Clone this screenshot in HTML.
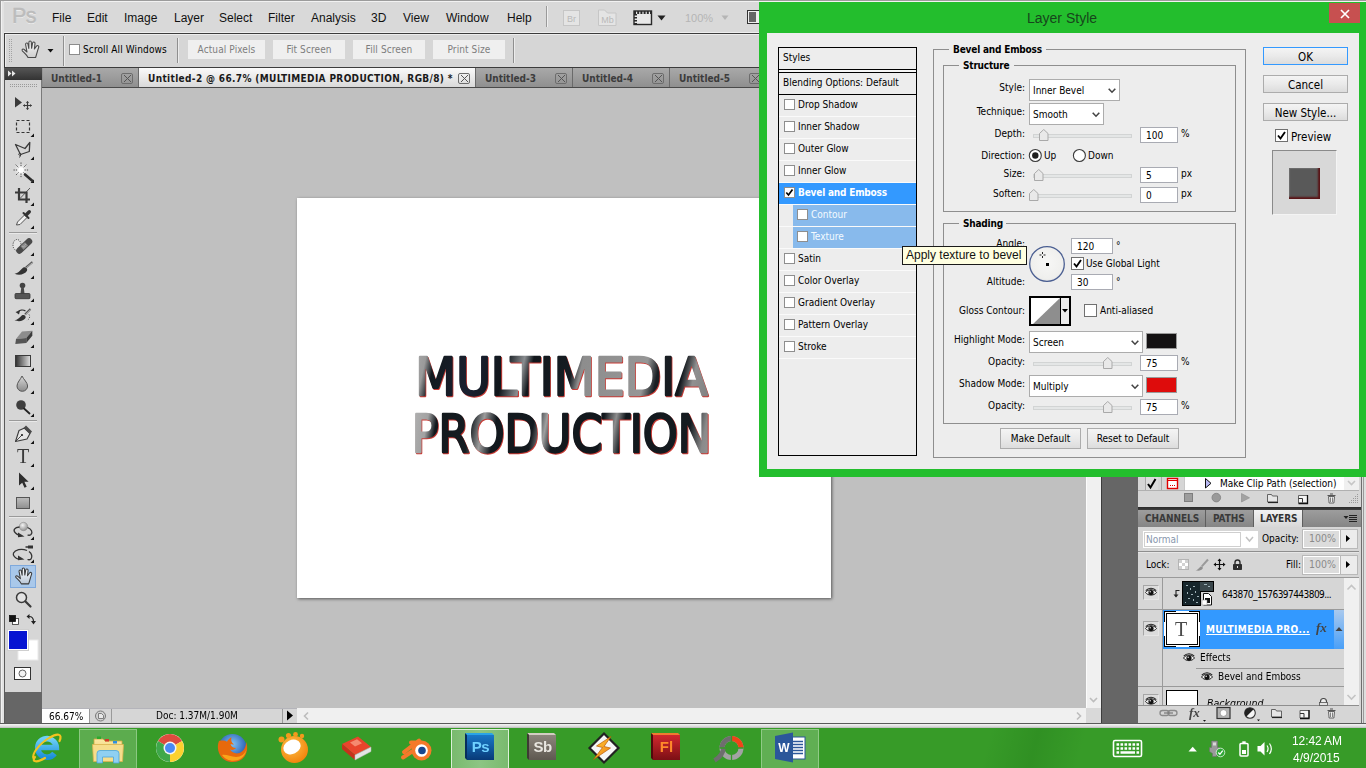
<!DOCTYPE html>
<html><head><meta charset="utf-8"><title>Layer Style</title>
<style>
*{box-sizing:border-box;margin:0;padding:0}
html,body{width:1366px;height:768px;overflow:hidden;background:#d6d6d6}
body{position:relative;font-family:"DejaVu Sans Condensed","Liberation Sans",sans-serif;font-size:10px;color:#000}
.a{position:absolute}
.t{position:absolute;white-space:nowrap;line-height:1}
.seg{font-family:"Liberation Sans","DejaVu Sans Condensed",sans-serif}
/* ---------- app chrome ---------- */
#menubar{left:0;top:0;width:1366px;height:34px;background:#d9d9d9;border-bottom:1px solid #3c3c3c;border-top:1px solid #9c9c9c;box-shadow:inset 0 1px 0 #f2f2f2,inset 0 -1px 0 #efefef}
#menubar .t{top:11px;font-size:12px;color:#111}
#optbar{left:4px;top:34px;width:1362px;height:34px;background:#d6d6d6;border-left:1px solid #3c3c3c;border-bottom:1px solid #3c3c3c;box-shadow:inset 1px 1px 0 #ededed}
.obtn{position:absolute;top:40px;height:19px;background:#efefef;color:#7d7d7d;text-align:center;line-height:20px;font-size:10px;letter-spacing:.1px}
#tabbar{left:42px;top:68px;width:1044px;height:20px;background:linear-gradient(#9a9a9a,#8a8a8a);border-bottom:1px solid #4a4a4a}
.tab{position:absolute;top:68px;height:19px;background:linear-gradient(#a9a9a9,#8f8f8f);border-right:1px solid #6a6a6a;font-weight:bold;font-size:10px;color:#3c3c3c}
.tab.act{background:linear-gradient(#fafafa,#d9d9d9);color:#1a1a1a}
.tab .t{top:6px}
.tabx{position:absolute;top:5px;width:12px;height:11px;border:1px solid #6d6d6d;border-radius:2px;background:linear-gradient(135deg,transparent 46%,#555 46%,#555 54%,transparent 54%),linear-gradient(45deg,transparent 46%,#555 46%,#555 54%,transparent 54%);background-size:7px 7px;background-position:center;background-repeat:no-repeat}
#canvas{left:42px;top:88px;width:1044px;height:620px;background:#c0c0c0}
#doc{left:297px;top:198px;width:534px;height:400px;background:#fff;box-shadow:1px 1px 3px rgba(0,0,0,.55)}
#vscroll{left:1086px;top:68px;width:15px;height:640px;background:#f0f0f0}
#dock{left:1101px;top:68px;width:37px;height:656px;background:#666}
#toolbar{left:5px;top:68px;width:37px;height:624px;background:#d6d6d6;border-right:1px solid #7a7a7a}
#toolhead{left:5px;top:68px;width:37px;height:12px;background:linear-gradient(#555,#333)}
#toolbelow{left:5px;top:692px;width:37px;height:32px;background:#666}
#status{left:42px;top:706px;width:1059px;height:18px;background:#d6d6d6}
#winbottom{left:0;top:724px;width:1366px;height:4px;background:#d9d9d9;border-top:1px solid #8a8a8a}
#taskbar{left:0;top:728px;width:1366px;height:40px;background:#359a27}
/* ---------- panels ---------- */
#panels{left:1138px;top:477px;width:224px;height:247px;background:#d6d6d6}
/* ---------- dialog ---------- */
#dlg{left:759px;top:2px;width:620px;height:475px;background:#23be2d}
#dlgin{left:767px;top:33px;width:592px;height:436px;background:#ededed}
</style></head>
<body>
<!-- ===== app chrome ===== -->
<div id="menubar" class="a seg">
 <span class="t" style="left:12px;top:5px;font-size:21.500px;color:#bcbcbc;font-family:'Liberation Sans',sans-serif;letter-spacing:-.5px;-webkit-text-stroke:.5px #bcbcbc;text-shadow:0 1px 0 #f2f2f2">Ps</span>
 <span class="t" style="left:52px">File</span>
 <span class="t" style="left:87px">Edit</span>
 <span class="t" style="left:124px">Image</span>
 <span class="t" style="left:174px">Layer</span>
 <span class="t" style="left:219px">Select</span>
 <span class="t" style="left:268px">Filter</span>
 <span class="t" style="left:311px">Analysis</span>
 <span class="t" style="left:371px">3D</span>
 <span class="t" style="left:403px">View</span>
 <span class="t" style="left:446px">Window</span>
 <span class="t" style="left:507px">Help</span>
</div>
<div id="optbar" class="a"></div>
<div class="obtn" style="left:188px;width:77px">Actual Pixels</div>
<div class="obtn" style="left:273px;width:72px">Fit Screen</div>
<div class="obtn" style="left:353px;width:72px">Fill Screen</div>
<div class="obtn" style="left:433px;width:72px">Print Size</div>
<span class="t" style="left:83px;top:45px;font-size:10px;letter-spacing:.12px">Scroll All Windows</span>

<div class="a" style="left:0;top:0;width:1px;height:728px;background:#999"></div>
<div class="a" style="left:1px;top:1px;width:1px;height:726px;background:#f2f2f2"></div>
<svg class="a" style="left:0;top:0" width="760" height="68" viewBox="0 0 760 68"><defs><linearGradient id="gHandO" x1="0" x2="0" y1="0" y2="1"><stop offset="0" stop-color="#f6f6f6"/><stop offset="1" stop-color="#cfcfcf"/></linearGradient></defs>
<!-- menubar right icons -->
<path d="M546.500 6v21" stroke="#9a9a9a"/><path d="M547.500 6v21" stroke="#f0f0f0"/>
<rect x="563.500" y="10.500" width="16" height="15" fill="#e4e4e4" stroke="#c6c6c6"/>
<text x="571.500" y="21.500" text-anchor="middle" font-family="Liberation Sans,sans-serif" font-size="9" fill="#b9b9b9">Br</text>
<path d="M598.500 25.500v-15.500h6l3 3h8.500v12.500z" fill="#e4e4e4" stroke="#c6c6c6"/>
<text x="607.500" y="22.500" text-anchor="middle" font-family="Liberation Sans,sans-serif" font-size="9" fill="#b9b9b9">Mb</text>
<rect x="634" y="11" width="17.500" height="13.500" fill="#e9e9e9" stroke="#2a2a2a" stroke-width="1.400"/>
<path d="M634 12.500h18" stroke="#2a2a2a" stroke-width="3" stroke-dasharray="2 1.200"/>
<path d="M635.500 14v10" stroke="#2a2a2a" stroke-width="3" stroke-dasharray="1.500 1.500"/>
<path d="M657.500 15.500h8l-4 5z" fill="#222"/>
<text x="685" y="21.500" font-family="Liberation Sans,sans-serif" font-size="11" fill="#b5b5b5">100%</text>
<path d="M721.500 15.500h7l-3.500 4.500z" fill="#b5b5b5"/>
<rect x="747.500" y="10.500" width="16" height="13" fill="#eee" stroke="#333"/><rect x="749" y="12" width="7" height="10" fill="#666"/>
<!-- options bar -->
<path d="M9.500 39v23M11.500 39v23" stroke="#a4a4a4" stroke-dasharray="1 1"/>
<path d="M28 57.500C27 55 24 52.500 22.300 50.800C21.500 49.500 23 48.500 24.200 49.500L27 52L25.600 44.500C25.400 42.800 27.600 42.400 27.900 44L28.800 48.500L28.900 42.300C28.900 40.600 31.300 40.600 31.300 42.300L31.600 48.300L32.600 43C32.900 41.400 35.200 41.800 35 43.500L34.400 49L36.500 46.200C37.300 44.900 39.300 45.800 38.700 47.300C37.500 50.500 36.800 54 35.600 57.500Z" fill="url(#gHandO)" stroke="#4a4a4a" stroke-width="1.100" stroke-linejoin="round"/>
<path d="M47.500 49h6l-3 3.500z" fill="#111"/>
<path d="M63.500 36v30M177.500 38v25M513.500 38v25" stroke="#8f8f8f"/><path d="M64.500 36v30M178.500 38v25M514.500 38v25" stroke="#ececec"/>
<rect x="69.500" y="44.500" width="10" height="10" fill="#fff" stroke="#8c8c8c"/>
</svg>
<div id="tabbar" class="a"></div>
<div class="tab" style="left:43px;width:96px"><span class="t" style="left:8px">Untitled-1</span><i class="tabx" style="left:78px"></i></div>
<div class="tab act" style="left:139px;width:337px"><span class="t" style="left:9px;letter-spacing:.35px">Untitled-2 @ 66.7% (MULTIMEDIA PRODUCTION, RGB/8) *</span><i class="tabx" style="left:319px"></i></div>
<div class="tab" style="left:476px;width:97px"><span class="t" style="left:9px">Untitled-3</span><i class="tabx" style="left:79px"></i></div>
<div class="tab" style="left:573px;width:97px"><span class="t" style="left:9px">Untitled-4</span><i class="tabx" style="left:79px"></i></div>
<div class="tab" style="left:670px;width:97px"><span class="t" style="left:9px">Untitled-5</span><i class="tabx" style="left:79px"></i></div>
<div id="canvas" class="a"></div>
<div id="doc" class="a"></div>
<svg class="a" style="left:297px;top:198px" width="534" height="401" viewBox="297 198 534 401">
<defs>
<linearGradient id="tx1" gradientUnits="userSpaceOnUse" x1="414" y1="355" x2="709" y2="420">
<stop offset="0" stop-color="#a9a9a9"/><stop offset=".04" stop-color="#9a9a9a"/><stop offset=".07" stop-color="#141a20"/><stop offset=".2" stop-color="#1a2030"/><stop offset=".3" stop-color="#10161b"/><stop offset=".36" stop-color="#8a8d90"/><stop offset=".39" stop-color="#11171c"/><stop offset=".52" stop-color="#161c22"/><stop offset=".55" stop-color="#8d8d8d"/><stop offset=".76" stop-color="#969696"/><stop offset=".8" stop-color="#1a1f24"/><stop offset=".88" stop-color="#14191e"/><stop offset=".92" stop-color="#909090"/><stop offset="1" stop-color="#7c7c7c"/>
</linearGradient>
<linearGradient id="tx2" gradientUnits="userSpaceOnUse" x1="410" y1="412" x2="713" y2="470">
<stop offset="0" stop-color="#b4b4b4"/><stop offset=".06" stop-color="#a2a2a2"/><stop offset=".09" stop-color="#12181d"/><stop offset=".2" stop-color="#161c21"/><stop offset=".24" stop-color="#9c9c9c"/><stop offset=".28" stop-color="#12181d"/><stop offset=".4" stop-color="#141a1f"/><stop offset=".44" stop-color="#a0a0a0"/><stop offset=".47" stop-color="#13191e"/><stop offset=".62" stop-color="#11171c"/><stop offset=".66" stop-color="#8e8e8e"/><stop offset=".69" stop-color="#12181d"/><stop offset=".9" stop-color="#151b20"/><stop offset=".95" stop-color="#8a8a8a"/><stop offset="1" stop-color="#9a9a9a"/>
</linearGradient>
</defs>
<g font-family="DejaVu Sans,Liberation Sans,sans-serif" font-size="52" stroke-linejoin="round" stroke-linecap="round" stroke-width="2.400">
<text x="416" y="395.800" textLength="292.500" lengthAdjust="spacingAndGlyphs" fill="#c83a34" stroke="#c83a34">MULTIMEDIA</text>
<text x="412.500" y="453.300" textLength="299.500" lengthAdjust="spacingAndGlyphs" fill="#c83a34" stroke="#c83a34">PRODUCTION</text>
<text x="415.200" y="394.800" textLength="292.500" lengthAdjust="spacingAndGlyphs" fill="url(#tx1)" stroke="url(#tx1)">MULTIMEDIA</text>
<text x="411.700" y="452.300" textLength="299.500" lengthAdjust="spacingAndGlyphs" fill="url(#tx2)" stroke="url(#tx2)">PRODUCTION</text>
</g>
</svg>
<div id="vscroll" class="a"></div>
<div id="dock" class="a"></div><div class="a" style="left:1101px;top:68px;width:1px;height:655px;background:#3c3c3c"></div><div class="a" style="left:1086px;top:68px;width:1px;height:640px;background:#fbfbfb"></div>
<div id="toolbar" class="a"></div>
<div id="toolhead" class="a"></div><div class="a" style="left:4px;top:68px;width:1px;height:655px;background:#5a5a5a"></div><div class="a" style="left:2px;top:1px;width:2px;height:722px;background:#e2e2e2"></div>
<div id="toolbelow" class="a"></div>
<svg id="tools" class="a" style="left:0;top:0;will-change:transform" width="60" height="700" viewBox="0 0 60 700">
<defs>
<linearGradient id="gGrad" x1="0" x2="1"><stop offset="0" stop-color="#2e2e2e"/><stop offset="1" stop-color="#e2e2e2"/></linearGradient>
<linearGradient id="gRect" x1="0" x2="0" y1="0" y2="1"><stop offset="0" stop-color="#bdbdbd"/><stop offset="1" stop-color="#8e8e8e"/></linearGradient>
<radialGradient id="gBall" cx=".4" cy=".35" r=".7"><stop offset="0" stop-color="#f4f4f4"/><stop offset="1" stop-color="#8a8a8a"/></radialGradient>
<radialGradient id="gStar"><stop offset="0" stop-color="#fff"/><stop offset=".55" stop-color="#e9e9e9"/><stop offset="1" stop-color="#d6d6d6" stop-opacity="0"/></radialGradient>
<linearGradient id="gDrop" x1="0" x2="0" y1="0" y2="1"><stop offset="0" stop-color="#d8d8d8"/><stop offset="1" stop-color="#8c8c8c"/></linearGradient>
<linearGradient id="gHand" x1="0" x2="0" y1="0" y2="1"><stop offset="0" stop-color="#ffffff"/><stop offset="1" stop-color="#b9c6d6"/></linearGradient>
</defs>
<!-- header arrows + grip -->
<path d="M8 70.5l3.5 3-3.5 3zM12 70.5l3.5 3-3.5 3z" fill="#e8e8e8"/>
<path d="M10 84.500h28M10 86.500h28" stroke="#9a9a9a" stroke-width="1" stroke-dasharray="1 1"/>
<g fill="#111"><path d="M34 133.5V137H30.500z"/><path d="M34 156.5V160H30.500z"/><path d="M34 179.5V183H30.500z"/><path d="M34 202.5V206H30.500z"/><path d="M34 225.5V229H30.500z"/><path d="M34 252.5V256H30.500z"/><path d="M34 275.5V279H30.500z"/><path d="M34 298.5V302H30.500z"/><path d="M34 321.5V325H30.500z"/><path d="M34 344.5V348H30.500z"/><path d="M34 367.5V371H30.500z"/><path d="M34 390.5V394H30.500z"/><path d="M34 413.5V417H30.500z"/><path d="M34 440.5V444H30.500z"/><path d="M34 463.5V467H30.500z"/><path d="M34 486.5V490H30.500z"/><path d="M34 509.5V513H30.500z"/><path d="M34 536.5V540H30.500z"/><path d="M34 559.5V563H30.500z"/><path d="M34 583.5V587H30.500z"/></g>
<!-- separators -->
<path d="M9 232.5h28M9 420.5h28M9 516.5h28" stroke="#9a9a9a"/>
<path d="M9 233.5h28M9 421.5h28M9 517.5h28" stroke="#e9e9e9"/>
<!-- move -->
<path d="M15 97v10.5l7-5z" fill="#3a3a3a"/>
<path d="M27.5 101.5v8M23.5 105.5h8" stroke="#3a3a3a" stroke-width="1.2"/>
<path d="M26 103l1.5-2 1.5 2zM26 108l1.5 2 1.5-2zM25 104l-2 1.5 2 1.5zM30 104l2 1.5-2 1.5z" fill="#3a3a3a"/>
<!-- marquee -->
<rect x="16.5" y="120.5" width="13" height="12" fill="none" stroke="#333" stroke-width="1.2" stroke-dasharray="3 2"/>
<!-- lasso -->
<path d="M15.5 144.5L25 148.5L29.8 142.5L29.3 151.5L20.5 154.5Z" fill="none" stroke="#3a3a3a" stroke-width="1.3" stroke-linejoin="round"/>
<path d="M21 154c-1.5-1.5-3 0-2 1s2.500-.5 2-1zM21 154.500l-1.500 3" fill="none" stroke="#3a3a3a" stroke-width="1"/>
<!-- wand -->
<circle cx="21" cy="170" r="7.500" fill="url(#gStar)"/>
<path d="M21 162.500v4M21 173.500v4M13.500 170h4M24.500 170h4M15.700 164.700l2.800 2.800M23.500 172.500l2.800 2.800M26.300 164.700l-2.800 2.800M18.500 172.500l-2.800 2.800" stroke="#4a4a4a" stroke-width="1" stroke-dasharray="1.300 1"/>
<circle cx="21" cy="170" r="2.600" fill="#fff"/>
<path d="M25 174.500l7.500 6.500" stroke="#2e2e2e" stroke-width="2.600" stroke-linecap="round"/>
<!-- crop -->
<path d="M19 188v11.500h11M15 192.500h11.500v10.500" fill="none" stroke="#3a3a3a" stroke-width="2.200"/>
<path d="M20 198.500l10-10.500" stroke="#3a3a3a" stroke-width=".8"/>
<!-- eyedropper -->
<path d="M16.500 225l1-3 7-7 2.500 2.500-7 7z" fill="#f2f2f2" stroke="#444" stroke-width=".9"/>
<path d="M23.500 213l5 5" stroke="#333" stroke-width="2" stroke-linecap="round"/>
<path d="M26.500 214.500l2.800-2.800" stroke="#333" stroke-width="3.400" stroke-linecap="round"/>
<!-- healing -->
<ellipse cx="17" cy="245" rx="4" ry="5.500" fill="#e4e4e4" stroke="#333" stroke-width="1" stroke-dasharray="1 1.300"/>
<path d="M19.500 250.500l9.500-9" stroke="#4a4a4a" stroke-width="6.500" stroke-linecap="round"/>
<path d="M22 248l4.500-4.200" stroke="#8a8a8a" stroke-width="4.500"/>
<path d="M23 246.500l.1-.1M25 245l.1-.1M24.500 247l.1-.1" stroke="#ddd" stroke-width="1" stroke-linecap="round"/>
<!-- brush -->
<path d="M14.500 273.800c3.500-.3 5.500-3.300 8.500-6 2.500-1.500 5 .5 4 3-2 3.500-7.500 5-12.500 3z" fill="#333"/>
<path d="M26 267.500l6.500-5.500" stroke="#555" stroke-width="2.200"/>
<path d="M26.300 267.800l6.300-5.300" stroke="#ddd" stroke-width=".7"/>
<!-- stamp -->
<circle cx="22.500" cy="285.500" r="2.800" fill="#444"/>
<path d="M21.300 287h2.400l.8 6.500h-4z" fill="#4a4a4a"/>
<rect x="15" y="293.500" width="15" height="5.200" rx="1" fill="#555" stroke="#333" stroke-width=".8"/>
<!-- history brush -->
<path d="M14.500 320.300c3-.3 5-2.800 7.500-5 2.300-1.200 4.300.6 3.500 2.700-1.800 3-6.500 4-11 2.300z" fill="#333"/>
<path d="M25 314.500l5.500-5.500" stroke="#555" stroke-width="2"/>
<path d="M25.300 314.800l5.300-5.300" stroke="#ddd" stroke-width=".6"/>
<path d="M17.500 312.500c2-2.500 5.500-3 8-1.500" fill="none" stroke="#333" stroke-width="1.300"/>
<path d="M15.500 312l4.500-1.500-1 4z" fill="#333"/>
<path d="M29 314.500c1.500 2 .5 5-2.500 6" fill="none" stroke="#444" stroke-width="1" stroke-dasharray="1 1.500"/>
<!-- eraser -->
<path d="M22 331.500l10.300-.8-6 7.300-10.300 1z" fill="#8d8d8d"/>
<path d="M16 339l10.300-1v5l-11 1z" fill="#555"/>
<path d="M26.300 338l6-7.300v5l-6 7.300z" fill="#3c3c3c"/>
<!-- gradient -->
<rect x="15.500" y="355.500" width="15" height="11" fill="url(#gGrad)" stroke="#3a3a3a"/>
<!-- blur -->
<path d="M22 376c-1.500 3.500-5 6.500-5 10a5.300 5.300 0 0 0 10.600 0c0-3.500-4-6.500-5.600-10z" fill="url(#gDrop)" stroke="#555" stroke-width="1"/>
<!-- dodge -->
<circle cx="21" cy="405" r="4.800" fill="#3e3e3e"/>
<path d="M24 408.500l5.500 5" stroke="#222" stroke-width="1.800" stroke-linecap="round"/>
<!-- pen -->
<path d="M15.500 441.500l3.500-11 5.500-2.500 5.500 5.500-3 5.500z" fill="#e6e6e6" stroke="#3a3a3a" stroke-width="1.100" stroke-linejoin="round"/>
<path d="M15.500 441.500l6.500-6.500" stroke="#3a3a3a" stroke-width=".9"/>
<circle cx="22" cy="435" r="1.100" fill="#222"/>
<path d="M26 425.500l6 6-2 2.500-6.500-6z" fill="#4a4a4a"/>
<!-- type -->
<text x="23" y="463" text-anchor="middle" font-family="Liberation Serif,serif" font-size="20" fill="#3a3a3a">T</text>
<!-- path select -->
<path d="M19 472.500v13l3.200-2.800 2.300 5 2.200-1-2.300-5h4.200z" fill="#2e2e2e"/>
<!-- rectangle -->
<rect x="16.500" y="497.500" width="13" height="11" fill="url(#gRect)" stroke="#555"/>
<!-- 3d rotate -->
<circle cx="23.500" cy="526.500" r="4.200" fill="url(#gBall)" stroke="#888" stroke-width=".5"/>
<path d="M19.500 527c-5 .5-7 3-4 6 1 1 2.500 1.800 4 2.300M27.500 527.500c4 1.500 5.500 5 3.500 7-1 .8-2.500.8-3.500.5" fill="none" stroke="#333" stroke-width="1.300"/>
<path d="M18 532.500l6.500 4-6.500.8z" fill="#333"/>
<!-- 3d camera -->
<path d="M27 550.500c-6-2.500-12-.5-13.500 2.500-1 2.500 1.500 5 5.500 6.500M29 551.500c3 2 3.500 5.500 2 7.500-1 .8-2.500.8-3.500.5" fill="none" stroke="#333" stroke-width="1.300"/>
<path d="M18 555.500l6.500 4-6.500.8z" fill="#333"/>
<rect x="28" y="545.500" width="5" height="3" fill="#333"/><path d="M25.500 547h3" stroke="#333" stroke-width="1.500"/>
<!-- hand selected -->
<rect x="10.500" y="565.500" width="25" height="22" fill="#a9c8ea" stroke="#7fa9dc"/>
<path transform="translate(-5.530,528.700) scale(.96)" d="M28 57.500C27 55 24 52.500 22.300 50.800C21.500 49.500 23 48.500 24.200 49.500L27 52L25.600 44.500C25.400 42.800 27.600 42.400 27.900 44L28.800 48.500L28.900 42.300C28.900 40.600 31.300 40.600 31.300 42.300L31.600 48.300L32.600 43C32.900 41.400 35.200 41.800 35 43.500L34.400 49L36.500 46.200C37.300 44.900 39.300 45.800 38.700 47.300C37.500 50.500 36.800 54 35.600 57.500Z" fill="url(#gHand)" stroke="#3a3a3a" stroke-width="1.100" stroke-linejoin="round"/>
<!-- zoom -->
<circle cx="21.500" cy="597.500" r="5" fill="#e3e3e3" stroke="#3a3a3a" stroke-width="1.500"/>
<path d="M25.500 601.500l5 5" stroke="#3a3a3a" stroke-width="2.200" stroke-linecap="round"/>
<!-- default colours / swap -->
<rect x="12.500" y="618.500" width="6" height="6" fill="#fff" stroke="#333" stroke-width=".8"/>
<rect x="9.500" y="615.500" width="6" height="6" fill="#111" stroke="#111" stroke-width=".8"/>
<path d="M29 616.500c3 0 4.500 1.500 4.500 5" fill="none" stroke="#222" stroke-width="1.200"/>
<path d="M26.500 616.500l3-2.500v5zM31 621l2.500 3.500 2.500-3.500z" fill="#222"/>
<!-- fg / bg -->
<rect x="18" y="640" width="20" height="20" fill="#fff" stroke="#e9e9e9"/>
<rect x="8.500" y="630.500" width="19" height="19" fill="#0614d2" stroke="#fff" stroke-width="1"/>
<rect x="7.500" y="629.500" width="21" height="21" fill="none" stroke="#cfcfcf" stroke-width="1"/>
<!-- quick mask -->
<rect x="14.500" y="667.500" width="16" height="12" fill="#fff" stroke="#333"/>
<circle cx="22.500" cy="673.500" r="3.500" fill="#f2f2f2" stroke="#555" stroke-width=".9"/>
</svg>

<!--PANELS-START-->
<div class="a" style="left:1138px;top:477px;width:223px;height:246px;background:#d6d6d6"></div>
<div class="a" style="left:1361px;top:477px;width:1px;height:247px;background:#6e6e6e"></div>
<div class="a" style="left:1362px;top:477px;width:4px;height:251px;background:#dedede"></div>
<div class="a" style="left:1363px;top:477px;width:1px;height:247px;background:#9a9a9a"></div>
<div class="a" style="left:1185px;top:477px;width:159px;height:13px;background:#fff"></div>
<div class="a" style="left:1344px;top:477px;width:15px;height:13px;background:#f0f0f0"></div>
<div class="a" style="left:1145px;top:477px;width:13px;height:13px;background:#dcdcdc;border-left:1px solid #a8a8a8"></div>
<div class="a" style="left:1161px;top:477px;width:1px;height:13px;background:#a8a8a8"></div>
<div class="a" style="left:1184px;top:477px;width:1px;height:13px;background:#c8c8c8"></div>
<div class="a" style="left:1138px;top:490px;width:221px;height:1px;background:#b0b0b0"></div>
<span class="t" style="top:479px;font-size:10px;left:1220px;">Make Clip Path (selection)</span>
<div class="a" style="left:1138px;top:507px;width:223px;height:3px;background:linear-gradient(#2a2a2a,#3e3e3e)"></div>
<div class="a" style="left:1138px;top:510px;width:223px;height:17px;background:linear-gradient(#9d9d9d,#858585)"></div>
<div class="a" style="left:1205px;top:510px;width:1px;height:17px;background:#5e5e5e"></div>
<div class="a" style="left:1253px;top:510px;width:50px;height:17px;background:linear-gradient(#f2f2f2,#d8d8d8);border-left:1px solid #5e5e5e;border-right:1px solid #5e5e5e"></div>
<span class="t" style="top:514px;font-size:10px;left:1145px;color:#3a3a3a;font-weight:bold;letter-spacing:-.05px;">CHANNELS</span>
<span class="t" style="top:514px;font-size:10px;left:1213px;color:#3a3a3a;font-weight:bold;letter-spacing:-.05px;">PATHS</span>
<span class="t" style="top:514px;font-size:10px;left:1260px;color:#333;font-weight:bold;letter-spacing:-.05px;">LAYERS</span>
<div class="a" style="left:1143px;top:531px;width:115px;height:17px;background:#fff"></div>
<div class="a" style="left:1144px;top:532px;width:97px;height:15px;border:1px solid #cfcfcf"></div>
<span class="t" style="top:535px;font-size:10px;left:1146px;color:#8897ad;">Normal</span>
<span class="t" style="top:534px;font-size:10px;left:1262px;">Opacity:</span>
<div class="a" style="left:1303px;top:530px;width:37px;height:18px;background:#dcdcdc;border:1px solid #fff;box-shadow:0 0 0 1px #b9b9b9"></div><div class="a" style="left:1341px;top:530px;width:16px;height:18px;background:#ececec;box-shadow:0 0 0 1px #b9b9b9"></div><span class="t" style="top:533px;font-size:10.5px;left:1309px;color:#8a8a8a;">100%</span>
<div class="a" style="left:1303px;top:556px;width:37px;height:18px;background:#dcdcdc;border:1px solid #fff;box-shadow:0 0 0 1px #b9b9b9"></div><div class="a" style="left:1341px;top:556px;width:16px;height:18px;background:#ececec;box-shadow:0 0 0 1px #b9b9b9"></div><span class="t" style="top:559px;font-size:10.5px;left:1309px;color:#8a8a8a;">100%</span>
<div class="a" style="left:1138px;top:551px;width:221px;height:1px;background:#8e8e8e"></div>
<div class="a" style="left:1138px;top:552px;width:221px;height:1px;background:#e6e6e6"></div>
<span class="t" style="top:560px;font-size:10px;left:1146px;">Lock:</span>
<span class="t" style="top:560px;font-size:10px;left:1286px;">Fill:</span>
<div class="a" style="left:1138px;top:577px;width:221px;height:1px;background:#9a9a9a"></div>
<div class="a" style="left:1344px;top:578px;width:15px;height:127px;background:#f0f0f0"></div>
<div class="a" style="left:1162px;top:578px;width:1px;height:127px;background:#9a9a9a"></div>
<div class="a" style="left:1138px;top:609px;width:206px;height:1px;background:#9a9a9a"></div>
<div class="a" style="left:1143px;top:585px;width:16px;height:15px;background:#dcdcdc;border:1px solid #e6e6e6;border-top-color:#a6a6a6;border-left-color:#a6a6a6"></div>
<div class="a" style="left:1182px;top:581px;width:19px;height:25px;background:#16252b;border:1px solid #000"></div>
<div class="a" style="left:1200px;top:581px;width:14px;height:11px;background:#3a474c;border:1px solid #000;border-left:none"></div>
<span class="t" style="top:590px;font-size:10px;left:1222px;letter-spacing:-.55px;">643870_1576397443809...</span>
<div class="a" style="left:1163px;top:610px;width:181px;height:39px;background:#3399ff"></div>
<div class="a" style="left:1334px;top:610px;width:10px;height:39px;background:linear-gradient(#a9c9ee,#4aa0f8)"></div>
<div class="a" style="left:1143px;top:621px;width:16px;height:15px;background:#dcdcdc;border:1px solid #e6e6e6;border-top-color:#a6a6a6;border-left-color:#a6a6a6"></div>
<div class="a" style="left:1164px;top:611px;width:36px;height:36px;background:#fff;border:1px solid #000;box-shadow:inset 0 0 0 1px #fff,inset 0 0 0 2px #000"></div>
<div class="a" style="left:1176px;top:611px;width:13px;height:1px;background:#fff"></div>
<div class="a" style="left:1176px;top:646px;width:13px;height:1px;background:#fff"></div>
<div class="a" style="left:1164px;top:622px;width:1px;height:14px;background:#fff"></div>
<div class="a" style="left:1199px;top:622px;width:1px;height:14px;background:#fff"></div>
<span class="t" style="left:1175px;top:619px;font-size:20px;font-family:'Liberation Serif',serif;color:#4a4a4a;will-change:transform">T</span>
<span class="t" style="top:625px;font-size:10px;left:1206px;color:#fff;font-weight:bold;text-decoration:underline;letter-spacing:.4px;">MULTIMEDIA PRO...</span>
<span class="t" style="left:1316px;top:621px;font-size:13px;font-family:'Liberation Serif',serif;font-style:italic;font-weight:bold;color:#444">fx</span>
<span class="t" style="top:653px;font-size:10px;left:1200px;">Effects</span>
<span class="t" style="top:672px;font-size:10px;left:1218px;">Bevel and Emboss</span>
<div class="a" style="left:1196px;top:668px;width:148px;height:1px;background:#9a9a9a"></div>
<div class="a" style="left:1138px;top:686px;width:206px;height:1px;background:#9a9a9a"></div>
<div class="a" style="left:1143px;top:694px;width:16px;height:11px;background:#dcdcdc;border:1px solid #e6e6e6;border-top-color:#a6a6a6;border-left-color:#a6a6a6;border-bottom:none"></div>
<div class="a" style="left:1166px;top:690px;width:32px;height:15px;background:#fff;border:1px solid #000;border-bottom:none"></div>
<div class="a" style="left:1200px;top:687px;width:144px;height:18px;overflow:hidden"><span class="t" style="left:7px;top:11px;font-size:10.500px;font-style:italic">Background</span></div>
<div class="a" style="left:1138px;top:705px;width:221px;height:1px;background:#8e8e8e"></div>
<div class="a" style="left:1138px;top:723px;width:224px;height:1px;background:#555"></div>
<span class="t" style="left:1189px;top:706px;font-size:13px;font-family:'Liberation Serif',serif;font-style:italic;font-weight:bold;color:#444">fx</span>
<svg class="a" style="left:1138px;top:477px" width="228" height="247" viewBox="1138 477 228 247">
<!-- actions row icons -->
<path d="M1148 484l2.500 3.500 5-8.500" fill="none" stroke="#000" stroke-width="2"/>
<rect x="1167.500" y="478.500" width="10" height="10" fill="#fff" stroke="#e00000" stroke-width="1.400"/><path d="M1167 480.500h11" stroke="#e00000" stroke-width="1"/><path d="M1170 485.500h6" stroke="#e00000" stroke-width="1.200" stroke-dasharray="1 1"/>
<path d="M1205.500 478.500v9.500l5.500-4.700z" fill="#b9b9f4" stroke="#111" stroke-width="1"/>
<path d="M1348 481l3.500 3.500 3.500-3.500" fill="none" stroke="#c6c6c6" stroke-width="1.600"/>
<rect x="1184.500" y="493.500" width="8" height="8" fill="#9d9d9d" stroke="#7e7e7e"/>
<circle cx="1216.300" cy="497.600" r="4.300" fill="#9a9a9a" stroke="#808080" stroke-width=".8"/>
<path d="M1241.500 493.500v8.500l8-4.200z" fill="#a2a2a2" stroke="#8c8c8c" stroke-width=".6"/>
<path d="M1267.500 494.500h4l1 1.500h5v6h-10z" fill="#e6e6e6" stroke="#555" stroke-width=".9"/><path d="M1268 502.500h10" stroke="#222" stroke-width="1.200"/>
<path d="M1298.500 495.500h9v7.500h-9z" fill="#f4f4f4" stroke="#555" stroke-width=".9"/><path d="M1298.500 498.500h4v4" fill="none" stroke="#333" stroke-width="1"/><path d="M1307.500 495v8.500h-9" fill="none" stroke="#111" stroke-width="1.300"/>
<path d="M1328.500 496.500h6l-.6 6.500h-4.800z" fill="#eee" stroke="#555" stroke-width=".9"/><path d="M1327.500 495.500h8M1330 494h3" stroke="#555" stroke-width="1.100"/><path d="M1330.500 497.500v4.500M1332.500 497.500v4.500" stroke="#666" stroke-width=".8"/>
<g fill="#9a9a9a"><rect x="1357" y="494" width="1" height="1"/><rect x="1355" y="496" width="1" height="1"/><rect x="1357" y="496" width="1" height="1"/><rect x="1353" y="498" width="1" height="1"/><rect x="1355" y="498" width="1" height="1"/><rect x="1357" y="498" width="1" height="1"/><rect x="1351" y="500" width="1" height="1"/><rect x="1353" y="500" width="1" height="1"/><rect x="1355" y="500" width="1" height="1"/><rect x="1357" y="500" width="1" height="1"/><rect x="1349" y="502" width="1" height="1"/><rect x="1351" y="502" width="1" height="1"/><rect x="1353" y="502" width="1" height="1"/><rect x="1355" y="502" width="1" height="1"/><rect x="1357" y="502" width="1" height="1"/></g>
<!-- tab menu icon -->
<path d="M1343.500 516h5l-2.500 3z" fill="#222"/><path d="M1349 515.500h8M1349 517.500h8M1349 519.500h8M1349 521.500h8" stroke="#222" stroke-width="1"/>
<!-- blend dropdown chevron -->
<path d="M1246 537l3.500 4 3.500-4" fill="none" stroke="#c2c2c2" stroke-width="1.500"/>
<path d="M1346 535v7l4-3.500zM1346 561v7l4-3.500z" fill="#000"/>
<!-- lock icons -->
<rect x="1178.500" y="559.500" width="10" height="10" fill="#fff" stroke="#b4b4b4"/><path d="M1179 560h3v3h-3zM1185 560h3v3h-3zM1182 563h3v3h-3zM1179 566h3v3h-3zM1185 566h3v3h-3z" fill="#d2d2d2"/>
<path d="M1195.500 570.300c2-.2 3.200-2 4.800-3.600 1.600-.8 3 .5 2.400 1.900-1.200 2-4.200 2.700-7.200 1.700z" fill="#909090"/><path d="M1201.800 566.300l6.200-6.800" stroke="#9a9a9a" stroke-width="2"/>
<path d="M1219.500 559v11M1214 564.500h11" stroke="#111" stroke-width="1.200"/><path d="M1217.500 561l2-2.500 2 2.500zM1217.500 568l2 2.500 2-2.500zM1216 562.500l-2.500 2 2.500 2zM1223 562.500l2.500 2-2.500 2z" fill="#111"/>
<rect x="1233" y="564" width="9" height="6" rx=".8" fill="#2e2e2e"/><path d="M1235 564v-1.500a2.500 2.500 0 0 1 5 0v1.500" fill="none" stroke="#2e2e2e" stroke-width="1.400"/><rect x="1237" y="566" width="1" height="2" fill="#ddd"/>
<!-- eyes -->
<g transform="translate(1145.500,588)"><path d="M0 4.500C2.500 .800 8.500 .800 11 4.500 8.500 8 2.500 8 0 4.500z" fill="#f2f2f2" stroke="#222" stroke-width="1"/><circle cx="5.500" cy="4.500" r="2.600" fill="#111"/><circle cx="4.700" cy="3.700" r=".8" fill="#ddd"/><path d="M.3 2.600C3 -.5 8 -.5 10.700 2.600" fill="none" stroke="#222" stroke-width="1.100"/></g><g transform="translate(1145.500,624)"><path d="M0 4.500C2.500 .800 8.500 .800 11 4.500 8.500 8 2.500 8 0 4.500z" fill="#f2f2f2" stroke="#222" stroke-width="1"/><circle cx="5.500" cy="4.500" r="2.600" fill="#111"/><circle cx="4.700" cy="3.700" r=".8" fill="#ddd"/><path d="M.3 2.600C3 -.5 8 -.5 10.700 2.600" fill="none" stroke="#222" stroke-width="1.100"/></g><g transform="translate(1145.500,697)"><path d="M0 4.500C2.500 .800 8.500 .800 11 4.500 8.500 8 2.500 8 0 4.500z" fill="#f2f2f2" stroke="#222" stroke-width="1"/><circle cx="5.500" cy="4.500" r="2.600" fill="#111"/><circle cx="4.700" cy="3.700" r=".8" fill="#ddd"/><path d="M.3 2.600C3 -.5 8 -.5 10.700 2.600" fill="none" stroke="#222" stroke-width="1.100"/></g>
<g transform="translate(1183.500,653.500)"><path d="M0 4.500C2.500 .800 8.500 .800 11 4.500 8.500 8 2.500 8 0 4.500z" fill="#f2f2f2" stroke="#222" stroke-width="1"/><circle cx="5.500" cy="4.500" r="2.600" fill="#111"/><circle cx="4.700" cy="3.700" r=".8" fill="#ddd"/><path d="M.3 2.600C3 -.5 8 -.5 10.700 2.600" fill="none" stroke="#222" stroke-width="1.100"/></g><g transform="translate(1201.500,672.500)"><path d="M0 4.500C2.500 .800 8.500 .800 11 4.500 8.500 8 2.500 8 0 4.500z" fill="#f2f2f2" stroke="#222" stroke-width="1"/><circle cx="5.500" cy="4.500" r="2.600" fill="#111"/><circle cx="4.700" cy="3.700" r=".8" fill="#ddd"/><path d="M.3 2.600C3 -.5 8 -.5 10.700 2.600" fill="none" stroke="#222" stroke-width="1.100"/></g>
<!-- clip arrow -->
<path d="M1179.500 590.500h-3.500v6" fill="none" stroke="#222" stroke-width="1.100"/><path d="M1173.500 594.500l2.500 3 2.500-3z" fill="#222"/>
<!-- texture specks -->
<g fill="#9fb2b8"><rect x="1186" y="585" width="2" height="1"/><rect x="1190" y="588" width="1" height="2"/><rect x="1193" y="586" width="2" height="1"/><rect x="1187" y="592" width="1" height="2"/><rect x="1191" y="594" width="2" height="1"/><rect x="1195" y="591" width="1" height="2"/><rect x="1188" y="598" width="2" height="1"/><rect x="1193" y="599" width="1" height="2"/><rect x="1197" y="596" width="2" height="1"/><rect x="1204" y="584" width="3" height="1"/><rect x="1208" y="586" width="2" height="1"/><rect x="1185" y="602" width="1" height="1"/><rect x="1196" y="602" width="2" height="1"/></g>
<!-- smart object badge -->
<path d="M1203.500 593.500h5l3 3v8.500h-8z" fill="#fff" stroke="#111" stroke-width="1"/><rect x="1205" y="598" width="5" height="5" fill="#111"/><rect x="1202" y="600" width="5" height="5" fill="#fff" stroke="#888" stroke-width=".5"/>
<!-- scroll chevrons -->
<path d="M1347.500 589.500l4-4 4 4" fill="none" stroke="#c4c4c4" stroke-width="1.600"/><path d="M1347.500 695l4 4 4-4" fill="none" stroke="#c4c4c4" stroke-width="1.600"/>
<path d="M1335.500 631h7l-3.500-4z" fill="#444"/>
<!-- bg lock -->
<path d="M1320.500 705v-3.500a3 3 0 0 1 6 0v3.500" fill="#eee" stroke="#444" stroke-width="1.100"/><rect x="1319.500" y="702.500" width="8" height="3" fill="#e4e4e4" stroke="#555" stroke-width=".8"/>
<!-- bottom icons -->
<rect x="1160" y="710.500" width="9" height="5" rx="2.500" fill="none" stroke="#8a8a8a" stroke-width="1.300"/><rect x="1168" y="710.500" width="9" height="5" rx="2.500" fill="none" stroke="#8a8a8a" stroke-width="1.300"/><path d="M1164 713h9" stroke="#777" stroke-width="1.200"/>
<path d="M1203 720h3l-1.500 1.800z" fill="#111"/>
<rect x="1217" y="707.500" width="13" height="11" fill="#b4b4b4" stroke="#333" stroke-width="1.200"/><circle cx="1223.500" cy="713" r="3.400" fill="#fff" stroke="#666" stroke-width=".5"/>
<circle cx="1250" cy="713" r="5.300" fill="#f6f6f6" stroke="#333" stroke-width="1.100"/><path d="M1246.200 716.700a5.300 5.300 0 0 1 7.500-7.500z" fill="#222"/><path d="M1257 719.500h3l-1.500 1.800z" fill="#111"/>
<path d="M1271.500 709.500h4l1 1.500h5v6h-10z" fill="#e6e6e6" stroke="#555" stroke-width=".9"/><path d="M1272 717.500h10" stroke="#222" stroke-width="1.200"/>
<path d="M1300 710.500h9v7.500h-9z" fill="#f4f4f4" stroke="#555" stroke-width=".9"/><path d="M1300 713.500h4v4" fill="none" stroke="#333" stroke-width="1"/><path d="M1309 710v8.500h-9" fill="none" stroke="#111" stroke-width="1.300"/>
<path d="M1328.500 711.500h6l-.6 6.500h-4.800z" fill="#eee" stroke="#555" stroke-width=".9"/><path d="M1327.500 710.500h8M1330 709h3" stroke="#555" stroke-width="1.100"/><path d="M1330.500 712.500v4.500M1332.500 712.500v4.500" stroke="#666" stroke-width=".8"/>
</svg>
<!--PANELS-END-->
<!--BOTTOM-START-->
<div class="a" style="left:42px;top:708px;width:1059px;height:15px;background:#d6d6d6"></div>
<div class="a" style="left:42px;top:708px;width:47px;height:15px;background:#fff"></div>
<span class="t" style="top:712px;font-size:10px;left:49px;">66.67%</span>
<div class="a" style="left:89px;top:708px;width:1px;height:15px;background:#9a9a9a"></div>
<div class="a" style="left:111px;top:708px;width:1px;height:15px;background:#9a9a9a"></div>
<span class="t" style="top:711px;font-size:10px;left:156px;">Doc: 1.37M/1.90M</span>
<div class="a" style="left:282px;top:708px;width:1px;height:15px;background:#9a9a9a"></div>
<div class="a" style="left:42px;top:708px;width:255px;height:1px;background:#b4b4ba"></div>
<div class="a" style="left:297px;top:708px;width:789px;height:15px;background:#f0f0f0"></div>
<div class="a" style="left:1086px;top:708px;width:15px;height:15px;background:#d9d9d9"></div>
<div class="a" style="left:0px;top:723px;width:1366px;height:1px;background:#5a5a5a"></div>
<div class="a" style="left:0px;top:724px;width:1366px;height:4px;background:linear-gradient(#f4f4f4,#dcdcdc 60%,#b9b9b9)"></div>
<div class="a" style="left:0px;top:728px;width:1366px;height:40px;background:linear-gradient(105deg,rgba(0,0,0,0) 72%,rgba(0,70,0,.13) 75.500%,rgba(0,0,0,0) 79%),#379b28"></div>
<div class="a" style="left:79px;top:729px;width:58px;height:40px;background:#5cac4e;border:1px solid #8bc881"></div>
<div class="a" style="left:451px;top:729px;width:58px;height:40px;background:linear-gradient(90deg,#79ba6e,#8cc583 50%,#79ba6e);border:1px solid #dcefd8"></div>
<div class="a" style="left:761px;top:729px;width:58px;height:40px;background:#60af53;border:1px solid #90ca86"></div>
<span class="t" style="top:735px;font-size:12px;left:1292px;color:#fff;font-family:'Liberation Sans',sans-serif;letter-spacing:-.1px;">12:42 AM</span>
<span class="t" style="top:752px;font-size:12px;left:1293px;color:#fff;font-family:'Liberation Sans',sans-serif;">4/9/2015</span>
<svg class="a" style="left:0;top:690px" width="1366" height="78" viewBox="0 690 1366 78">
<defs>
<linearGradient id="ieb" x1="0" x2="0" y1="0" y2="1"><stop offset="0" stop-color="#6fd0f7"/><stop offset="1" stop-color="#1c8fd9"/></linearGradient>
<linearGradient id="fold" x1="0" x2="0" y1="0" y2="1"><stop offset="0" stop-color="#fbe9a4"/><stop offset="1" stop-color="#e9c45c"/></linearGradient>
<radialGradient id="gom" cx=".4" cy=".35" r=".75"><stop offset="0" stop-color="#ffc24a"/><stop offset="1" stop-color="#ef7d05"/></radialGradient>
<radialGradient id="ffg" cx=".5" cy=".35" r=".6"><stop offset="0" stop-color="#7fc2f4"/><stop offset="1" stop-color="#1d4fa8"/></radialGradient>
<linearGradient id="psg" x1="0" x2="0" y1="0" y2="1"><stop offset="0" stop-color="#1a78c8"/><stop offset="1" stop-color="#083a78"/></linearGradient>
<linearGradient id="sbg" x1="0" x2="0" y1="0" y2="1"><stop offset="0" stop-color="#8c857c"/><stop offset="1" stop-color="#5e5850"/></linearGradient>
<linearGradient id="flg" x1="0" x2="0" y1="0" y2="1"><stop offset="0" stop-color="#d0282e"/><stop offset="1" stop-color="#7c0f14"/></linearGradient>
<linearGradient id="wag" x1="0" x2="1" y1="0" y2="1"><stop offset="0" stop-color="#ffd23c"/><stop offset="1" stop-color="#f07a10"/></linearGradient>
</defs>
<!-- status icons -->
<circle cx="100.500" cy="716" r="5" fill="#d0d0d0" stroke="#777" stroke-width="1"/><path d="M98.500 713.500h3l2 2v3h-5z" fill="#e8e8e8" stroke="#666" stroke-width=".8"/>
<path d="M287 710.500v10l6-5z" fill="#000"/>
<path d="M308 712.500l-3.500 3.500 3.500 3.500" fill="none" stroke="#bdbdbd" stroke-width="1.600"/>
<path d="M1077 712.500l3.500 3.500-3.500 3.500" fill="none" stroke="#bdbdbd" stroke-width="1.600"/>
<path d="M1090 698l3.500 3.500 3.500-3.500" fill="none" stroke="#bdbdbd" stroke-width="1.600"/>
<!-- IE -->
<path d="M54.500 753.500A9.300 9.300 0 1 1 56.300 747.500H39" fill="none" stroke="url(#ieb)" stroke-width="5.600"/>
<path d="M35 757c-4 5 2 6 10 1M50 737.500c7-4.500 13-4 9.500 3.500" fill="none" stroke="#f3c320" stroke-width="2.200" stroke-linecap="round"/>
<path d="M33.500 758.500c-2-5 6-15 17-21.500" fill="none" stroke="#f3c320" stroke-width="2" stroke-linecap="round"/>
<!-- Explorer -->
<path d="M94 739h9l2 2h17v20h-28z" fill="url(#fold)" stroke="#d1a640" stroke-width=".8"/>
<path d="M92.500 744.500h31l-1 17h-29z" fill="#f6dd8c" stroke="#d9b24e" stroke-width=".8"/>
<rect x="97" y="736.500" width="4" height="2.500" fill="#2daa2d"/><rect x="105" y="739" width="4" height="2.500" fill="#d43a2a"/><rect x="113" y="741" width="4" height="2.500" fill="#2f8fe0"/>
<path d="M97 763v-9.500q0-3 3-3h16q3 0 3 3v9.500h-5.500v-6h-11v6z" fill="#8fd0f2" stroke="#4aa6dc" stroke-width=".8"/>
<!-- Chrome -->
<circle cx="170" cy="748" r="14" fill="#fff"/>
<path d="M170 748L157.900 741A14 14 0 0 1 182.100 741z" fill="#dd4b3e"/>
<path d="M170 748L182.100 741A14 14 0 0 1 170 762z" fill="#fcd12f"/>
<path d="M170 748L170 762A14 14 0 0 1 157.900 741z" fill="#3fa84a"/>
<circle cx="170" cy="748" r="6.500" fill="#f4f4f4"/><circle cx="170" cy="748" r="5" fill="#4a8af4"/>
<!-- Firefox -->
<circle cx="232.500" cy="748" r="14" fill="url(#ffg)"/>
<path d="M219 741c-2.500 6-1 14 5 18.500 7 4.500 16 3 20.500-3 3-4.500 3.500-10 1.500-14.500.3 5-2.500 9.500-6.500 11-4 1.200-8-.5-9.500-3.500 2.500 1 5 0 6-1.500-3 0-5-1.500-5.500-4 1 .5 2.500.6 3.500.2-2.500-1.500-3.500-4.500-2.500-7-2 1-3.500 2.500-4.500 4.500-1.500-1-4.500-1.500-8-.7z" fill="#e8690c"/>
<path d="M222 755c4 6 13 7.500 19 3.500 3-2 5-5.500 5.500-9-1.500 4.500-5.500 7.500-10.500 7.500-5.500 0-10-3-14-2z" fill="#f9a51a"/>
<!-- GOM -->
<circle cx="294.500" cy="749.500" r="13.500" fill="url(#gom)"/>
<ellipse cx="292" cy="747" rx="9" ry="7" fill="#fff" transform="rotate(-25 292 747)"/>
<circle cx="281.500" cy="739.500" r="3" fill="#f39a1c"/><circle cx="288.500" cy="735.500" r="2.600" fill="#f39a1c"/><circle cx="295.500" cy="734.500" r="2.400" fill="#f39a1c"/><circle cx="302" cy="736" r="2.200" fill="#f39a1c"/>
<!-- Book -->
<path d="M342 744l16-7.500 13 10.500-16 8z" fill="#e8452c"/>
<path d="M342 744l13 11v5l-13-11z" fill="#c8301c"/>
<path d="M355 755l16-8v4.500l-16 8.500z" fill="#e4e4e4" stroke="#b9b9b9" stroke-width=".5"/>
<path d="M350 742.500l7-3.300 5 4-7 3.300z" fill="#f58a70"/>
<!-- Blender -->
<path d="M404 752l15-11.500M411 742.500h10M403 757.500l9-6" stroke="#f5792a" stroke-width="4" stroke-linecap="round"/>
<circle cx="421.500" cy="750.500" r="10" fill="#f5792a"/><circle cx="421.500" cy="750.500" r="6.300" fill="#fff"/><circle cx="422" cy="750.500" r="3.800" fill="#17468f"/>
<!-- Ps -->
<path d="M465 733h27l2 2h-27z" fill="#2aa4e6"/><path d="M465 733l2 2v25l-2-2z" fill="#062c5c"/><rect x="467" y="735" width="27" height="25" fill="url(#psg)"/>
<!-- Sb -->
<path d="M527 733h27l2 2h-27z" fill="#d2ccc2"/><path d="M527 733l2 2v25l-2-2z" fill="#3e3a34"/><rect x="529" y="735" width="27" height="25" fill="url(#sbg)"/>
<!-- Winamp -->
<path d="M589.500 748l14.500-14.500 14.500 14.500-14.500 14.500z" fill="#f6f6f6" stroke="#222" stroke-width="2.200"/>
<path d="M611 736.500l-14.500 9.500 6 1.500-9 12 17-11.500-6.500-1.500z" fill="url(#wag)" stroke="#b85c08" stroke-width=".7"/>
<!-- Fl -->
<path d="M651 733h27l2 2h-27z" fill="#f07a30"/><path d="M651 733l2 2v25l-2-2z" fill="#50090c"/><rect x="653" y="735" width="27" height="25" fill="url(#flg)"/>
<!-- Pie -->
<circle cx="731.500" cy="748" r="9.500" fill="none" stroke="#a3a3a3" stroke-width="5"/>
<path d="M731.500 738.500a9.500 9.500 0 0 1 9.500 9.500" fill="none" stroke="#f04418" stroke-width="5"/>
<path d="M722 748a9.500 9.500 0 0 1 9.500-9.500" fill="none" stroke="#6e6e6e" stroke-width="5"/>
<path d="M723.500 747c0 6-3 10-9 13.500" fill="none" stroke="#6e6e6e" stroke-width="4.500"/>
<path d="M731.500 736v24M719.500 748h24" stroke="#379b28" stroke-width="1.300"/>
<!-- Word -->
<rect x="790" y="737" width="15" height="22" fill="#fff" stroke="#2b579a" stroke-width="1"/>
<path d="M793 741.500h10M793 744.500h10M793 747.500h10M793 750.500h10M793 753.500h10" stroke="#2b579a" stroke-width="1.300"/>
<path d="M775 736l18-3.500v30l-18-3.500z" fill="#2b579a"/>
<!-- tray -->
<rect x="1113.500" y="740.500" width="28" height="16" rx="1.500" fill="none" stroke="#fff" stroke-width="1.600"/>
<path d="M1116.500 744.500h22.500M1116.500 748.500h22.500" stroke="#fff" stroke-width="2.400" stroke-dasharray="2.600 1.400"/><path d="M1116.500 752.500h2.600M1120.500 752.500h14.500M1136.500 752.500h2.600" stroke="#fff" stroke-width="2.400"/>
<path d="M1188.500 751.500l4.200-4.700 4.200 4.700z" fill="#fff"/>
<path d="M1211.500 741h6v6.500h2v4l-3 2v3h-4v-3l-3-2v-4h2z" fill="#9a9a9a" stroke="#6e6e6e" stroke-width=".6"/><rect x="1213" y="742.500" width="3" height="3" fill="#d8d8d8"/>
<circle cx="1220.500" cy="752.500" r="4.300" fill="#2fa836" stroke="#e8f6e8" stroke-width=".8"/><path d="M1218.300 752.500l1.600 1.800 2.800-3.600" fill="none" stroke="#fff" stroke-width="1.300"/>
<rect x="1240" y="743.500" width="8" height="12.500" rx="1" fill="none" stroke="#fff" stroke-width="1.500"/><rect x="1242.300" y="741.300" width="3.400" height="2" fill="#fff"/><rect x="1242" y="750" width="4" height="4" fill="#fff"/>
<path d="M1257.500 746h3l4-4v13.500l-4-4h-3z" fill="#fff"/><path d="M1267 745.500q2.200 3 0 6.500M1269.500 743.500q3.600 5 0 10.500" fill="none" stroke="#fff" stroke-width="1.200"/>
</svg>
<span class="t" style="left:467px;width:27px;text-align:center;top:739px;font-size:15px;color:#6fd0ff;font-family:'Liberation Sans',sans-serif;font-weight:bold;letter-spacing:-.5px">Ps</span>
<span class="t" style="left:529px;width:27px;text-align:center;top:739px;font-size:15px;color:#e9e6e0;font-family:'Liberation Sans',sans-serif;font-weight:bold;letter-spacing:-.5px">Sb</span>
<span class="t" style="left:653px;width:27px;text-align:center;top:739px;font-size:15px;color:#ff8a2a;font-family:'Liberation Sans',sans-serif;font-weight:bold;">Fl</span>
<span class="t" style="left:775px;width:18px;text-align:center;top:742px;font-size:12px;color:#fff;font-family:'Liberation Sans',sans-serif;font-weight:bold;">W</span>
<!--BOTTOM-END-->
<!-- ===== dialog ===== -->
<!--DLG-START-->
<div id="dlg" class="a"></div><div id="dlgin" class="a"></div>
<span class="t seg" style="left:1027px;top:11px;font-size:14px;color:#17451c">Layer Style</span>
<div class="a" style="left:1329px;top:3px;width:31px;height:20px;background:#c75050"></div>
<svg class="a" style="left:1340px;top:9px" width="10" height="10" viewBox="0 0 10 10"><path d="M1 1l8 8M9 1l-8 8" stroke="#fff" stroke-width="1.700"/></svg>
<div class="a" style="left:778px;top:47px;width:139px;height:409px;border:1px solid #000;background:#ededed"></div>
<div class="a" style="left:779px;top:69px;width:137px;height:1px;background:#000"></div>
<div class="a" style="left:779px;top:70px;width:137px;height:2px;background:#f6f6f6"></div>
<div class="a" style="left:779px;top:72px;width:137px;height:1px;background:#000"></div>
<div class="a" style="left:779px;top:94px;width:137px;height:1px;background:#000"></div>
<span class="t" style="top:53px;font-size:10px;left:783px;">Styles</span>
<span class="t" style="top:78px;font-size:10px;left:783px;">Blending Options: Default</span>
<div class="a" style="left:779px;top:116px;width:137px;height:1px;background:#fafafa"></div>
<div class="a" style="left:784px;top:99px;width:11px;height:11px;background:#fff;border:1px solid #8e8e8e"></div>
<span class="t" style="top:100px;font-size:10px;left:798px;">Drop Shadow</span>
<div class="a" style="left:779px;top:138px;width:137px;height:1px;background:#fafafa"></div>
<div class="a" style="left:784px;top:121px;width:11px;height:11px;background:#fff;border:1px solid #8e8e8e"></div>
<span class="t" style="top:122px;font-size:10px;left:798px;">Inner Shadow</span>
<div class="a" style="left:779px;top:160px;width:137px;height:1px;background:#fafafa"></div>
<div class="a" style="left:784px;top:143px;width:11px;height:11px;background:#fff;border:1px solid #8e8e8e"></div>
<span class="t" style="top:144px;font-size:10px;left:798px;">Outer Glow</span>
<div class="a" style="left:779px;top:182px;width:137px;height:1px;background:#fafafa"></div>
<div class="a" style="left:784px;top:165px;width:11px;height:11px;background:#fff;border:1px solid #8e8e8e"></div>
<span class="t" style="top:166px;font-size:10px;left:798px;">Inner Glow</span>
<div class="a" style="left:779px;top:183px;width:137px;height:21px;background:#3399ff"></div>
<div class="a" style="left:779px;top:204px;width:137px;height:1px;background:#fafafa"></div>
<div class="a" style="left:784px;top:187px;width:11px;height:11px;background:#fff;border:1px solid #8e8e8e"></div>
<span class="t" style="top:188px;font-size:10px;left:798px;color:#fff;font-weight:bold;letter-spacing:-.2px;">Bevel and Emboss</span>
<div class="a" style="left:793px;top:205px;width:123px;height:21px;background:#88baec"></div>
<div class="a" style="left:779px;top:226px;width:137px;height:1px;background:#fafafa"></div>
<div class="a" style="left:797px;top:209px;width:11px;height:11px;background:#fff;border:1px solid #8e8e8e"></div>
<span class="t" style="top:210px;font-size:10px;left:811px;color:#f4faff;">Contour</span>
<div class="a" style="left:793px;top:227px;width:123px;height:21px;background:#88baec"></div>
<div class="a" style="left:779px;top:248px;width:137px;height:1px;background:#fafafa"></div>
<div class="a" style="left:797px;top:231px;width:11px;height:11px;background:#fff;border:1px solid #8e8e8e"></div>
<span class="t" style="top:232px;font-size:10px;left:811px;color:#f4faff;">Texture</span>
<div class="a" style="left:779px;top:270px;width:137px;height:1px;background:#fafafa"></div>
<div class="a" style="left:784px;top:253px;width:11px;height:11px;background:#fff;border:1px solid #8e8e8e"></div>
<span class="t" style="top:254px;font-size:10px;left:798px;">Satin</span>
<div class="a" style="left:779px;top:292px;width:137px;height:1px;background:#fafafa"></div>
<div class="a" style="left:784px;top:275px;width:11px;height:11px;background:#fff;border:1px solid #8e8e8e"></div>
<span class="t" style="top:276px;font-size:10px;left:798px;">Color Overlay</span>
<div class="a" style="left:779px;top:314px;width:137px;height:1px;background:#fafafa"></div>
<div class="a" style="left:784px;top:297px;width:11px;height:11px;background:#fff;border:1px solid #8e8e8e"></div>
<span class="t" style="top:298px;font-size:10px;left:798px;">Gradient Overlay</span>
<div class="a" style="left:779px;top:336px;width:137px;height:1px;background:#fafafa"></div>
<div class="a" style="left:784px;top:319px;width:11px;height:11px;background:#fff;border:1px solid #8e8e8e"></div>
<span class="t" style="top:320px;font-size:10px;left:798px;">Pattern Overlay</span>
<div class="a" style="left:779px;top:358px;width:137px;height:1px;background:#fafafa"></div>
<div class="a" style="left:784px;top:341px;width:11px;height:11px;background:#fff;border:1px solid #8e8e8e"></div>
<span class="t" style="top:342px;font-size:10px;left:798px;">Stroke</span>
<svg class="a" style="left:784px;top:187px" width="11" height="11" viewBox="0 0 11 11"><path d="M2.300 5.500l2.200 2.500 4-5.500" fill="none" stroke="#000" stroke-width="1.700"/></svg>
<div class="a" style="left:933px;top:49px;width:313px;height:409px;border:1px solid #8e8e8e"></div><div class="a" style="left:949px;top:47px;width:97px;height:5px;background:#ededed"></div><span class="t" style="top:45px;font-size:10px;left:953px;font-weight:bold;letter-spacing:-.2px;">Bevel and Emboss</span>
<div class="a" style="left:943px;top:65px;width:293px;height:147px;border:1px solid #8e8e8e"></div><div class="a" style="left:959px;top:63px;width:55px;height:5px;background:#ededed"></div><span class="t" style="top:61px;font-size:10px;left:963px;font-weight:bold;letter-spacing:-.2px;">Structure</span>
<div class="a" style="left:943px;top:223px;width:293px;height:201px;border:1px solid #8e8e8e"></div><div class="a" style="left:959px;top:221px;width:47px;height:5px;background:#ededed"></div><span class="t" style="top:219px;font-size:10px;left:963px;font-weight:bold;letter-spacing:-.2px;">Shading</span>
<span class="t" style="top:83px;font-size:10px;right:341px;">Style:</span>
<span class="t" style="top:107px;font-size:10px;right:341px;">Technique:</span>
<span class="t" style="top:129px;font-size:10px;right:341px;">Depth:</span>
<span class="t" style="top:151px;font-size:10px;right:341px;">Direction:</span>
<span class="t" style="top:169px;font-size:10px;right:341px;">Size:</span>
<span class="t" style="top:189px;font-size:10px;right:341px;">Soften:</span>
<span class="t" style="top:239px;font-size:10px;right:341px;">Angle:</span>
<span class="t" style="top:277px;font-size:10px;right:341px;">Altitude:</span>
<span class="t" style="top:306px;font-size:10px;right:341px;">Gloss Contour:</span>
<span class="t" style="top:335px;font-size:10px;right:341px;">Highlight Mode:</span>
<span class="t" style="top:357px;font-size:10px;right:341px;">Opacity:</span>
<span class="t" style="top:379px;font-size:10px;right:341px;">Shadow Mode:</span>
<span class="t" style="top:401px;font-size:10px;right:341px;">Opacity:</span>
<div class="a" style="left:1029px;top:79px;width:91px;height:22px;background:#fff;border:1px solid #acacac"></div><span class="t" style="top:86px;font-size:10px;left:1033px;">Inner Bevel</span><svg class="a" style="left:1108px;top:88px" width="8" height="6" viewBox="0 0 8 6"><path d="M.7.800l3.300 3.400 3.300-3.400" fill="none" stroke="#444" stroke-width="1.600"/></svg>
<div class="a" style="left:1029px;top:103px;width:75px;height:22px;background:#fff;border:1px solid #acacac"></div><span class="t" style="top:110px;font-size:10px;left:1033px;">Smooth</span><svg class="a" style="left:1092px;top:112px" width="8" height="6" viewBox="0 0 8 6"><path d="M.7.800l3.300 3.400 3.300-3.400" fill="none" stroke="#444" stroke-width="1.600"/></svg>
<div class="a" style="left:1029px;top:331px;width:114px;height:22px;background:#fff;border:1px solid #acacac"></div><span class="t" style="top:338px;font-size:10px;left:1033px;">Screen</span><svg class="a" style="left:1131px;top:340px" width="8" height="6" viewBox="0 0 8 6"><path d="M.7.800l3.300 3.400 3.300-3.400" fill="none" stroke="#444" stroke-width="1.600"/></svg>
<div class="a" style="left:1029px;top:375px;width:114px;height:22px;background:#fff;border:1px solid #acacac"></div><span class="t" style="top:382px;font-size:10px;left:1033px;">Multiply</span><svg class="a" style="left:1131px;top:384px" width="8" height="6" viewBox="0 0 8 6"><path d="M.7.800l3.300 3.400 3.300-3.400" fill="none" stroke="#444" stroke-width="1.600"/></svg>
<div class="a" style="left:1033px;top:134px;width:99px;height:4px;background:#e4e6e6;border:1px solid #d2d4d4"></div><svg class="a" style="left:1039px;top:129px" width="10" height="12" viewBox="0 0 10 12"><path d="M.5 11.500v-7l4.250-4 4.250 4v7z" fill="#e9e9e9" stroke="#a9a9a9"/></svg>
<div class="a" style="left:1033px;top:174px;width:99px;height:4px;background:#e4e6e6;border:1px solid #d2d4d4"></div><svg class="a" style="left:1034px;top:169px" width="10" height="12" viewBox="0 0 10 12"><path d="M.5 11.500v-7l4.250-4 4.250 4v7z" fill="#e9e9e9" stroke="#a9a9a9"/></svg>
<div class="a" style="left:1033px;top:194px;width:99px;height:4px;background:#e4e6e6;border:1px solid #d2d4d4"></div><svg class="a" style="left:1029px;top:189px" width="10" height="12" viewBox="0 0 10 12"><path d="M.5 11.500v-7l4.250-4 4.250 4v7z" fill="#e9e9e9" stroke="#a9a9a9"/></svg>
<div class="a" style="left:1033px;top:362px;width:99px;height:4px;background:#e4e6e6;border:1px solid #d2d4d4"></div><svg class="a" style="left:1103px;top:357px" width="10" height="12" viewBox="0 0 10 12"><path d="M.5 11.500v-7l4.250-4 4.250 4v7z" fill="#e9e9e9" stroke="#a9a9a9"/></svg>
<div class="a" style="left:1033px;top:406px;width:99px;height:4px;background:#e4e6e6;border:1px solid #d2d4d4"></div><svg class="a" style="left:1103px;top:401px" width="10" height="12" viewBox="0 0 10 12"><path d="M.5 11.500v-7l4.250-4 4.250 4v7z" fill="#e9e9e9" stroke="#a9a9a9"/></svg>
<div class="a" style="left:1140px;top:127px;width:38px;height:16px;background:#fff;border:1px solid #a9abb3"></div><span class="t" style="top:131px;font-size:10px;left:1146px;">100</span><span class="t" style="top:129px;font-size:10px;left:1181px;">%</span>
<div class="a" style="left:1140px;top:167px;width:38px;height:16px;background:#fff;border:1px solid #a9abb3"></div><span class="t" style="top:171px;font-size:10px;left:1146px;">5</span><span class="t" style="top:169px;font-size:10px;left:1181px;">px</span>
<div class="a" style="left:1140px;top:187px;width:38px;height:16px;background:#fff;border:1px solid #a9abb3"></div><span class="t" style="top:191px;font-size:10px;left:1146px;">0</span><span class="t" style="top:189px;font-size:10px;left:1181px;">px</span>
<div class="a" style="left:1071px;top:238px;width:42px;height:16px;background:#fff;border:1px solid #a9abb3"></div><span class="t" style="top:242px;font-size:10px;left:1077px;">120</span><span class="t" style="top:241px;font-size:10px;left:1116px;">°</span>
<div class="a" style="left:1071px;top:274px;width:42px;height:16px;background:#fff;border:1px solid #a9abb3"></div><span class="t" style="top:278px;font-size:10px;left:1077px;">30</span><span class="t" style="top:277px;font-size:10px;left:1116px;">°</span>
<div class="a" style="left:1140px;top:355px;width:38px;height:16px;background:#fff;border:1px solid #a9abb3"></div><span class="t" style="top:359px;font-size:10px;left:1146px;">75</span><span class="t" style="top:357px;font-size:10px;left:1181px;">%</span>
<div class="a" style="left:1140px;top:399px;width:38px;height:16px;background:#fff;border:1px solid #a9abb3"></div><span class="t" style="top:403px;font-size:10px;left:1146px;">75</span><span class="t" style="top:401px;font-size:10px;left:1181px;">%</span>
<svg class="a" style="left:1028px;top:148px" width="60" height="15" viewBox="0 0 60 15"><circle cx="7.300" cy="7.500" r="6" fill="#fff" stroke="#3c3c3c" stroke-width="1.100"/><circle cx="7.300" cy="7.500" r="3.200" fill="#1e1e1e"/><circle cx="51.400" cy="7.500" r="6" fill="#fff" stroke="#3c3c3c" stroke-width="1.100"/></svg>
<span class="t" style="top:151px;font-size:10px;left:1044px;">Up</span>
<span class="t" style="top:151px;font-size:10px;left:1088px;">Down</span>
<svg class="a" style="left:1028px;top:245px" width="38" height="38" viewBox="0 0 38 38"><defs><radialGradient id="dial" cx=".5" cy=".45" r=".6"><stop offset="0" stop-color="#f7f7f6"/><stop offset=".8" stop-color="#efefed"/><stop offset="1" stop-color="#d9dade"/></radialGradient></defs><circle cx="19" cy="19" r="17.300" fill="url(#dial)" stroke="#4b5f92" stroke-width="1.300"/><path d="M14.500 7v2M14.500 11v2M11.500 10h2M15.500 10h2" stroke="#222" stroke-width="1"/><rect x="18" y="18" width="3" height="3" fill="#000"/></svg>
<div class="a" style="left:1071px;top:257px;width:13px;height:13px;background:#fff;border:1px solid #707070"></div><svg class="a" style="left:1071px;top:257px" width="13" height="13" viewBox="0 0 13 13"><path d="M3 6.500l2.500 3 4.500-6.500" fill="none" stroke="#000" stroke-width="1.900"/></svg>
<span class="t" style="top:259px;font-size:10px;left:1086px;">Use Global Light</span>
<div class="a" style="left:1084px;top:304px;width:13px;height:13px;background:#fff;border:1px solid #707070"></div>
<span class="t" style="top:306px;font-size:10px;left:1100px;">Anti-aliased</span>
<div class="a" style="left:1029px;top:296px;width:42px;height:30px;background:#fff;border:2px solid #000"></div>
<svg class="a" style="left:1031px;top:298px" width="38" height="26" viewBox="0 0 38 26"><path d="M2 26L29 0v26z" fill="#8e8e8e"/><rect x="29" y="0" width="9" height="26" fill="#ededed"/><path d="M29.500 0v26" stroke="#000" stroke-width="1"/><path d="M31 11h6l-3 3.500z" fill="#000"/></svg>
<div class="a" style="left:1146px;top:333px;width:31px;height:16px;background:#141213;border:1px solid #9a9a9a"></div>
<div class="a" style="left:1146px;top:377px;width:31px;height:16px;background:#de0c0c;border:1px solid #9a9a9a"></div>
<div class="a" style="left:1000px;top:428px;width:81px;height:21px;background:linear-gradient(#f4f4f4,#eaeaea 50%,#dcdcdc);border:1px solid #acacac"></div><span class="t" style="left:1000px;width:81px;text-align:center;top:434px;font-size:10px;">Make Default</span>
<div class="a" style="left:1087px;top:428px;width:92px;height:21px;background:linear-gradient(#f4f4f4,#eaeaea 50%,#dcdcdc);border:1px solid #acacac"></div><span class="t" style="left:1087px;width:92px;text-align:center;top:434px;font-size:10px;">Reset to Default</span>
<div class="a" style="left:1263px;top:47px;width:85px;height:18px;background:linear-gradient(#f4f4f4,#eaeaea 50%,#dcdcdc);border:1px solid #3399ff"></div><span class="t" style="left:1263px;width:85px;text-align:center;top:52px;font-size:11.5px;">OK</span>
<div class="a" style="left:1263px;top:75px;width:85px;height:18px;background:linear-gradient(#f4f4f4,#eaeaea 50%,#dcdcdc);border:1px solid #acacac"></div><span class="t" style="left:1263px;width:85px;text-align:center;top:80px;font-size:11.5px;">Cancel</span>
<div class="a" style="left:1263px;top:103px;width:85px;height:18px;background:linear-gradient(#f4f4f4,#eaeaea 50%,#dcdcdc);border:1px solid #acacac"></div><span class="t" style="left:1263px;width:85px;text-align:center;top:108px;font-size:11.5px;">New Style...</span>
<div class="a" style="left:1275px;top:129px;width:13px;height:13px;background:#fff;border:1px solid #707070"></div><svg class="a" style="left:1275px;top:129px" width="13" height="13" viewBox="0 0 13 13"><path d="M3 6.500l2.500 3 4.500-6.500" fill="none" stroke="#000" stroke-width="1.900"/></svg>
<span class="t" style="top:132px;font-size:11.5px;left:1291px;">Preview</span>
<div class="a" style="left:1272px;top:150px;width:65px;height:65px;background:#d8d8d8;border-top:1px solid #8a8a8a;border-left:1px solid #8a8a8a;border-right:1px solid #f4f4f4;border-bottom:1px solid #f4f4f4"></div>
<div class="a" style="left:1289px;top:168px;width:31px;height:31px;background:#595959;box-shadow:inset -2px -2px 2px #5a1416,inset 1px 1px 1px #6e6e6e"></div>
<div class="a" style="left:902px;top:246px;width:125px;height:19px;background:#ffffe1;border:1px solid #1a1a1a"></div>
<span class="t seg" style="left:906px;top:249px;font-size:12px;color:#111">Apply texture to bevel</span>
<!--DLG-END-->
</body></html>
